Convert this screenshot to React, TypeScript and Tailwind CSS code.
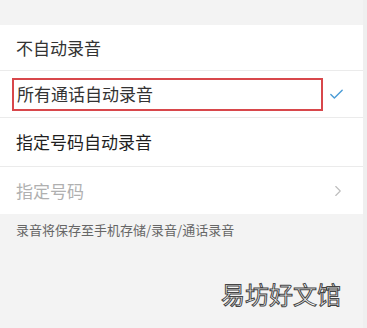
import { Check, ChevronRight } from "lucide-react";

const font = "font-['Noto_Sans_CJK_SC','Noto_Sans',sans-serif]";

export default function App() {
  return (
    <div className={`relative w-[367px] h-[328px] overflow-hidden bg-[#f3f3f3] ${font}`}>
      <div className="h-[25px]" />
      <div className="bg-white">
        <div className="h-[46px] flex items-center pl-[16px] border-b border-[#ebebeb]">
          <span className="text-[17px] text-[#333]">不自动录音</span>
        </div>
        <div className="h-[47px] flex items-center pl-[12px] pr-[22px] border-b border-[#ebebeb]">
          <div className="w-[311px] h-[33px] border-2 border-[#d8474b] flex items-center pl-[3px]">
            <span className="text-[17px] text-[#333]">所有通话自动录音</span>
          </div>
          <Check className="ml-auto w-[17px] h-[17px] text-[#4a9cd6]" strokeWidth={2} />
        </div>
        <div className="h-[49px] flex items-center pl-[16px] border-b border-[#ebebeb]">
          <span className="text-[17px] text-[#1f1f1f]">指定号码自动录音</span>
        </div>
        <div className="h-[47px] flex items-center pl-[16px] pr-[20px]">
          <span className="text-[17px] text-[#b0b0b0]">指定号码</span>
          <ChevronRight className="ml-auto w-[18px] h-[18px] text-[#bdbdbd]" strokeWidth={1.5} />
        </div>
      </div>
      <div className="pl-[16px] pt-[2px]">
        <span className="text-[13px] leading-[18px] text-[#666]">录音将保存至手机存储/录音/通话录音</span>
      </div>
      <div className="absolute right-0 top-0 h-full w-[4px] bg-[#efefef]" />
      <div className="absolute left-[221px] top-[278px] text-[24px] leading-[32px] text-white [-webkit-text-stroke:1px_#444] font-['Noto_Sans_CJK_SC',sans-serif]">
        易坊好文馆
      </div>
    </div>
  );
}
